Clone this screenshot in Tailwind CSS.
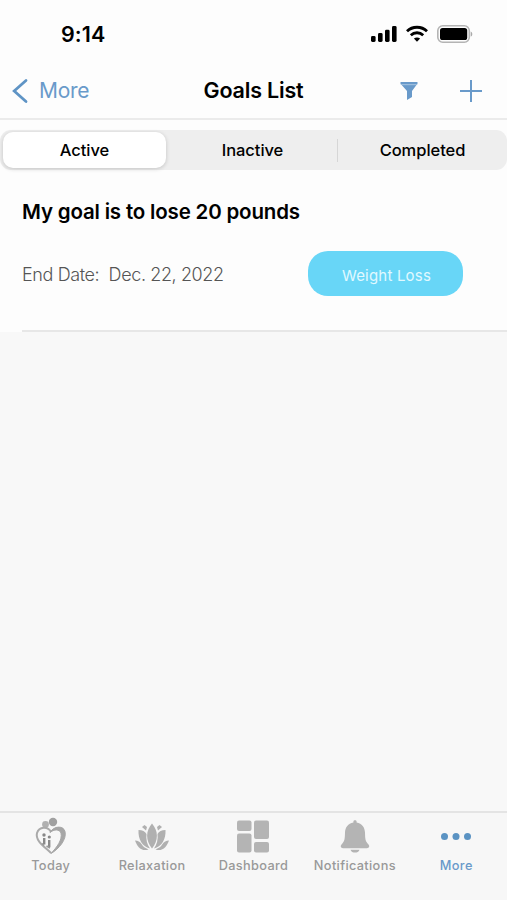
<!DOCTYPE html>
<html lang="en">
<head>
<meta charset="utf-8">
<title>Goals List</title>
<script src="https://cdn.jsdelivr.net/npm/@tailwindcss/browser@4"></script>
</head>
<body class="bg-[#f8f8f8]">
<div class="flex h-[900px] w-[507px] flex-col overflow-hidden bg-[#f8f8f8] font-['Inter',sans-serif] text-black">
  <header class="flex h-[120px] shrink-0 flex-col border-b-2 border-[#ebebeb] bg-[#fdfdfd]">
    <div class="flex h-[68px] items-center justify-between pl-[61px] pr-[34px]">
      <span class="pt-[2px] text-[21.5px] font-semibold leading-none tracking-[0.1px]">9:14</span>
      <div class="flex items-center">
        <svg class="h-[18px] w-[27px]" viewBox="0 0 27 18"><rect x="1" y="11" width="4.6" height="6" rx="1.4"/><rect x="8" y="8" width="4.6" height="9" rx="1.4"/><rect x="15" y="4.7" width="4.6" height="12.3" rx="1.4"/><rect x="22" y="1" width="4.6" height="16" rx="1.4"/></svg>
        <svg class="ml-[8px] h-[18px] w-[24px]" viewBox="0 0 24 18" fill="none" stroke="#000" stroke-width="2.8"><path d="M2 6.2C7.5 .9 16.500 .9 22 6.200"/><path d="M5.800 10.200C9.300 6.900 14.700 6.900 18.200 10.200"/><path d="M12 16.800 8.900 13.600C10.600 12 13.400 12 15.100 13.600Z" fill="#000" stroke="none"/></svg>
        <svg class="ml-[7px] h-[20px] w-[37px]" viewBox="0 0 37 20"><rect x="1.800" y="1.800" width="31.500" height="16.400" rx="5" fill="none" stroke="#b4b4b4" stroke-width="1.600"/><rect x="4" y="4" width="27.200" height="12" rx="2.600"/><path d="M34.700 7.400C36.800 8.200 36.800 11.800 34.700 12.600Z" fill="#aaa"/></svg>
      </div>
    </div>
    <div class="grid h-[45px] grid-cols-[1fr_auto_1fr] items-center">
      <div class="flex items-center pl-[12px] text-[#699aca]">
        <svg class="h-[26px] w-[16px]" viewBox="0 0 16 26" fill="none" stroke="#5f94c5" stroke-width="2.800" stroke-linecap="round"><path d="M14 2.500 2.200 13 14 23.500"/></svg>
        <span class="ml-[11px] text-[21px] leading-none tracking-[-0.3px]">More</span>
      </div>
      <h1 class="text-[21.500px] font-semibold leading-none tracking-[-0.2px]">Goals List</h1>
      <div class="flex items-center justify-end pr-[24px]">
        <svg class="h-[20px] w-[18px]" viewBox="0 0 18 20" fill="#699aca"><path d="M.500 1H17.500V3.300H.500Z"/><path d="M1 3.300H17L12 10V16L7 19V10Z"/><path d="M2 3.700H16" stroke="#a9c6e2" stroke-width=".8"/></svg>
        <svg class="ml-[41px] h-[24px] w-[24px]" viewBox="0 0 24 24" fill="none" stroke="#699aca" stroke-width="2"><path d="M12 1V23M1 12H23"/></svg>
      </div>
    </div>
  </header>

  <main class="flex h-[212px] shrink-0 flex-col bg-[#fdfdfd]">
    <div class="mt-[10px] flex h-[40px] items-center rounded-[11px] bg-[#eeeeee] text-[16.500px] font-medium leading-none tracking-[-0.05px]">
      <div class="ml-[3px] flex h-[36px] w-[163px] items-center justify-center rounded-[10px] bg-white pt-px shadow-[0_1px_4px_rgba(0,0,0,0.18)]">Active</div>
      <div class="flex w-[171px] items-center justify-center pl-[2px] pt-px">Inactive</div>
      <div class="h-[23px] w-px bg-[#d6d6d6]"></div>
      <div class="flex flex-1 items-center justify-center pt-px">Completed</div>
    </div>
    <article class="ml-[22px] flex flex-1 flex-col border-b-2 border-[#e7e7e7]">
      <h2 class="mt-[32px] text-[20.500px] font-semibold leading-[20px] tracking-[-0.18px]">My goal is to lose 20 pounds</h2>
      <div class="mt-[29px] flex h-[45px] items-center justify-between pr-[44px]">
        <p class="whitespace-pre pt-[3px] text-[18px] font-light leading-none tracking-[-0.39px] text-[#555]">End Date:  Dec. 22, 2022</p>
        <span class="flex h-[45px] w-[155px] items-center justify-center rounded-[20px] bg-[#68d6f7] pl-[2px] pt-[3px] text-[15px] leading-none tracking-[0.2px] text-[#e1f9ff]">Weight Loss</span>
      </div>
    </article>
  </main>

  <div class="flex-1"></div>

  <nav class="grid h-[89px] shrink-0 grid-cols-5 border-t-2 border-[#e4e4e4] bg-[#f7f7f7] text-[12.750px] font-medium leading-none tracking-[0.35px] text-[#999]">
    <div class="flex flex-col items-center pt-[4px]">
      <svg class="h-[40px] w-[36px]" viewBox="0 0 36 40" fill="none"><circle cx="12.500" cy="7.500" r="3.400" fill="#b0b0b0"/><circle cx="20" cy="5" r="4.200" fill="#a0a0a0"/><path d="M18 15C15 9 6 9.500 4 16C2 24 12 30 18 36" stroke="#aaa" stroke-width="2"/><path d="M17 15.500C21 8.500 30.500 8.500 32 14.500C34 22 26 32 18 36.500C24 30 29.500 23 28 16C26.500 12 21 12 17 15.500Z" fill="#a6a6a6" stroke="#a6a6a6"/><circle cx="11" cy="18" r="1.700" fill="#888"/><circle cx="16.300" cy="20" r="1.600" fill="#888"/><path d="M11.200 21V27.500M16.200 23V30" stroke="#888" stroke-width="2.400"/><path d="M9 26.500 11 28.500M13.500 29 17 31" stroke="#999" stroke-width="1.500"/></svg>
      <span class="mt-[3px]">Today</span>
    </div>
    <div class="flex flex-col items-center pt-[4px]">
      <svg class="h-[40px] w-[36px]" viewBox="0 0 36 40" fill="#b0b0b0"><path d="M18 6.500C24.500 14 24.500 23.500 18 31.500C11.500 23.500 11.500 14 18 6.500Z"/><path d="M4.500 13C8.500 13 11 14.500 12.500 17C11.800 22 13 27.500 16 31.500C8 29.500 4 22 4.500 13Z"/><path d="M31.500 13C27.500 13 25 14.500 23.500 17C24.200 22 23 27.500 20 31.500C28 29.500 32 22 31.500 13Z"/><path d="M1 23.500C4 23.500 6 25 7.500 27C9 29.500 11 31 14.500 32.500C7.500 35 3 29.500 1 23.500Z"/><path d="M35 23.500C32 23.500 30 25 28.500 27C27 29.500 25 31 21.500 32.500C28.500 35 33 29.500 35 23.500Z"/><path d="M8 10 10.500 8 13 10 12 13.500ZM23 10 25.500 8 28 10 24 13.500Z"/></svg>
      <span class="mt-[3px]">Relaxation</span>
    </div>
    <div class="flex flex-col items-center pt-[4px]">
      <svg class="h-[40px] w-[36px]" viewBox="0 0 36 40" fill="#b4b4b4"><rect x="2" y="3.500" width="14.500" height="10.500" rx="2"/><rect x="19" y="3.500" width="15" height="18.500" rx="2"/><rect x="2" y="16.500" width="14.500" height="19" rx="2"/><rect x="19" y="25" width="15" height="10.500" rx="2"/></svg>
      <span class="mt-[3px]">Dashboard</span>
    </div>
    <div class="flex flex-col items-center pt-[4px]">
      <svg class="h-[40px] w-[36px]" viewBox="0 0 36 40" fill="#b4b4b4"><path d="M16.400 5.500V4.500C16.400 2.900 19.600 2.900 19.600 4.500V5.500C25 6.300 27.800 10.500 28 15.500C28.200 22 28.200 24 31.500 27.500C33 29.200 32 31.200 30 31.200H6C4 31.200 3 29.200 4.500 27.500C7.800 24 7.800 22 8 15.500C8.200 10.500 11 6.300 16.400 5.500Z"/><path d="M13.500 32.700H22.500C21.500 36.500 14.500 36.500 13.500 32.700Z"/></svg>
      <span class="mt-[3px]">Notifications</span>
    </div>
    <div class="flex flex-col items-center pt-[4px] text-[#699aca]">
      <svg class="h-[40px] w-[36px]" viewBox="0 0 36 40" fill="#5b93c3"><circle cx="6.500" cy="19.500" r="3.500"/><circle cx="18" cy="19.500" r="3.500"/><circle cx="29.500" cy="19.500" r="3.500"/></svg>
      <span class="mt-[3px]">More</span>
    </div>
  </nav>
</div>
</body>
</html>
